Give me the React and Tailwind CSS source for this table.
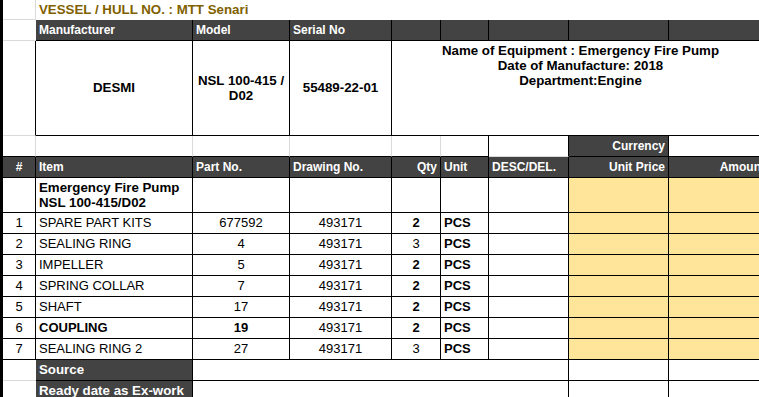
import React from 'react';

const items = [
  { n: 1, item: 'SPARE PART KITS', part: '677592', qty: 2, qtyBold: true },
  { n: 2, item: 'SEALING RING', part: '4', qty: 3, qtyBold: false },
  { n: 3, item: 'IMPELLER', part: '5', qty: 2, qtyBold: true },
  { n: 4, item: 'SPRING COLLAR', part: '7', qty: 2, qtyBold: true },
  { n: 5, item: 'SHAFT', part: '17', qty: 2, qtyBold: true },
  { n: 6, item: 'COUPLING', part: '19', qty: 2, qtyBold: true, bold: true },
  { n: 7, item: 'SEALING RING 2', part: '27', qty: 3, qtyBold: false },
];

// cell with black right + bottom lines
const line = 'border-r border-b border-black';
const dark = 'bg-[#434343] text-white font-bold text-[12px] border-r border-b border-black flex items-center px-[3px] whitespace-nowrap';

export default function App() {
  return (
    <div className="w-[759px] h-[397px] overflow-hidden bg-white font-['Liberation_Sans',Arial,sans-serif] text-[13px] text-black">
      <div className="grid grid-cols-[3px_33px_157px_97px_102px_49px_48px_80px_100px_100px] grid-rows-[20px_21px_95px_21px_21px_35px_21px_21px_21px_21px_21px_21px_21px_21px_21px] w-[768px]">
        {/* sheet edge */}
        <div className="row-span-15 bg-black" />

        {/* Vessel row */}
        <div className="border-r border-b border-[#dadada]" />
        <div className="col-span-8 flex items-center pl-[3px] text-[13.3px] font-bold text-[#7f6000] whitespace-nowrap">
          VESSEL / HULL NO. : MTT Senari
        </div>

        {/* Equipment header */}
        <div className="border-b border-[#dadada]" />
        <div className={dark}>Manufacturer</div>
        <div className={dark}>Model</div>
        <div className={dark}>Serial No</div>
        <div className={dark} />
        <div className={dark} />
        <div className={dark} />
        <div className={dark} />
        <div className={dark} />

        {/* Equipment details */}
        <div className="border-r border-r-black border-b border-b-[#dadada]" />
        <div className={`${line} flex items-center justify-center font-bold text-[13.3px]`}>DESMI</div>
        <div className={`${line} flex items-center justify-center text-center font-bold text-[13.3px] leading-[15px] px-[3px]`}>
          NSL 100-415 / D02
        </div>
        <div className={`${line} flex items-center justify-center font-bold text-[13.3px]`}>55489-22-01</div>
        <div className={`col-span-5 border-b border-black pt-[2px] text-center font-bold text-[13.3px] leading-[15px]`}>
          <div>Name of Equipment : Emergency Fire Pump</div>
          <div>Date of Manufacture: 2018</div>
          <div>Department:Engine</div>
        </div>

        {/* Spacer row with currency */}
        <div className="border-r border-r-[#dadada] border-b border-b-black" />
        <div className="border-r border-r-[#dadada] border-b border-b-black" />
        <div className="border-r border-r-[#dadada] border-b border-b-black" />
        <div className="border-r border-r-[#dadada] border-b border-b-black" />
        <div className="border-r border-r-[#dadada] border-b border-b-black" />
        <div className="border-r border-r-black border-b border-b-black" />
        <div className="border-r border-r-black border-b border-b-[#dadada]" />
        <div className={`${dark} justify-end`}>Currency</div>
        <div className="border-b border-black" />

        {/* Item header */}
        <div className={`${dark} justify-center`}>#</div>
        <div className={dark}>Item</div>
        <div className={dark}>Part No.</div>
        <div className={dark}>Drawing No.</div>
        <div className={`${dark} justify-end`}>Qty</div>
        <div className={dark}>Unit</div>
        <div className={dark}>DESC/DEL.</div>
        <div className={`${dark} justify-end`}>Unit Price</div>
        <div className={`${dark} justify-end`}>Amount</div>

        {/* Group title */}
        <div className={line} />
        <div className={`${line} flex flex-col justify-center px-[3px] font-bold text-[13.3px] leading-[15px]`}>
          <div>Emergency Fire Pump</div>
          <div>NSL 100-415/D02</div>
        </div>
        <div className={line} />
        <div className={line} />
        <div className={line} />
        <div className={line} />
        <div className={line} />
        <div className={`${line} bg-[#ffe599]`} />
        <div className={`${line} bg-[#ffe599]`} />

        {items.map((r) => (
          <React.Fragment key={r.n}>
            <div className={`${line} flex items-center justify-center`}>{r.n}</div>
            <div className={`${line} flex items-center px-[3px] whitespace-nowrap ${r.bold ? 'font-bold' : ''}`}>{r.item}</div>
            <div className={`${line} flex items-center justify-center ${r.bold ? 'font-bold' : ''}`}>{r.part}</div>
            <div className={`${line} flex items-center justify-center`}>493171</div>
            <div className={`${line} flex items-center justify-center ${r.qtyBold ? 'font-bold' : ''}`}>{r.qty}</div>
            <div className={`${line} flex items-center px-[3px] font-bold`}>PCS</div>
            <div className={line} />
            <div className={`${line} bg-[#ffe599]`} />
            <div className={`${line} bg-[#ffe599]`} />
          </React.Fragment>
        ))}

        {/* Footer */}
        <div className="border-b border-[#dadada]" />
        <div className={`${dark} text-[13.3px]`}>Source</div>
        <div className={`col-span-5 ${line}`} />
        <div className={line} />
        <div className={line} />

        <div className="border-b border-[#dadada]" />
        <div className={`${dark} text-[13.3px]`}>Ready date as Ex-work</div>
        <div className={`col-span-5 ${line}`} />
        <div className={line} />
        <div className={line} />
      </div>
    </div>
  );
}
